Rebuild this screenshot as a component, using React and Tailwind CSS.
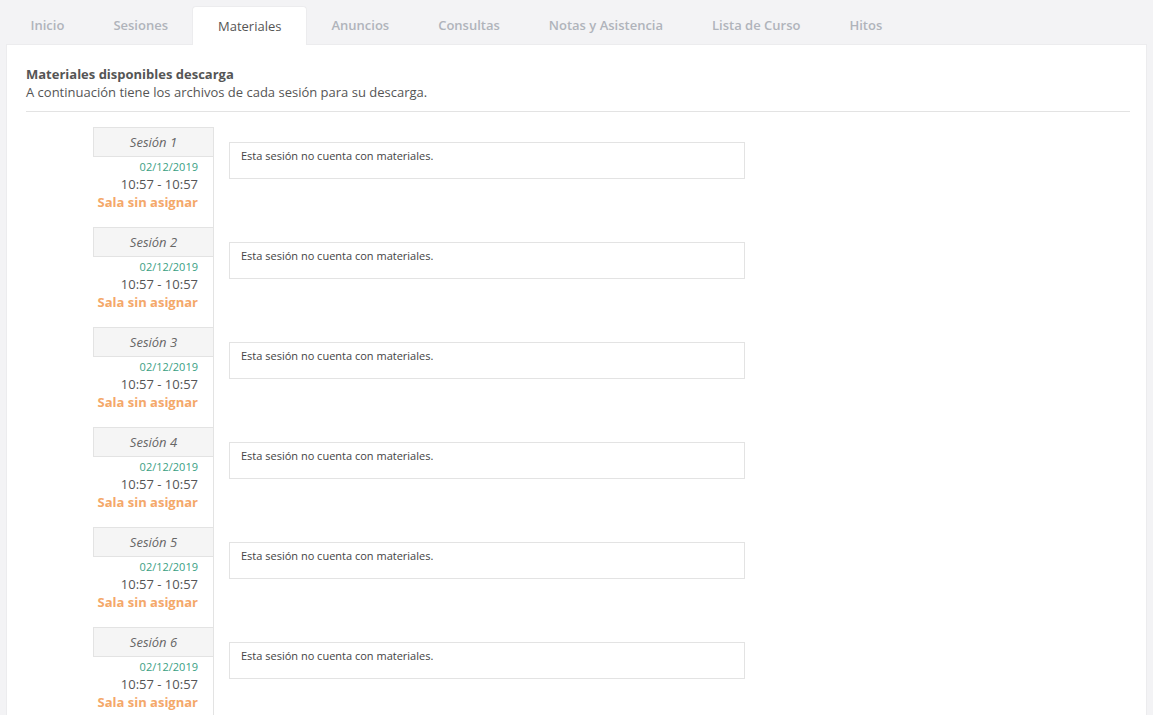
import React from "react";

const tabs = ["Inicio", "Sesiones", "Materiales", "Anuncios", "Consultas", "Notas y Asistencia", "Lista de Curso", "Hitos"];

function Session({ n }) {
  return (
    <div className="flex h-[100px]">
      <div className="w-[121px] ml-[67px] border-r border-[#e3e3e3] flex flex-col">
        <div className="h-[30px] pt-[2px] bg-[#f5f5f5] border-y border-l border-[#e3e3e3] flex items-center justify-center italic text-[13px] text-[#666]">
          Sesión {n}
        </div>
        <div className="pr-[15px] text-right text-[11px] leading-[14px] text-[#3aa083] mt-[3px]">02/12/2019</div>
        <div className="pr-[15px] text-right text-[13px] leading-[18px] text-[#555] mt-[1px]">10:57 - 10:57</div>
        <div className="pr-[15px] text-right text-[13px] leading-[18px] font-bold text-[#f4a86a]">Sala sin asignar</div>
      </div>
      <div className="ml-[15px] mt-[15px]">
        <div className="w-[516px] h-[37px] border border-[#e3e3e3] pl-[11px] pt-[6px] text-[11px] leading-[14px] text-[#444]">
          Esta sesión no cuenta con materiales.
        </div>
      </div>
    </div>
  );
}

export default function App() {
  return (
    <div className="w-[1153px] h-[715px] overflow-hidden bg-[#f3f3f5] font-['Open_Sans',sans-serif]">
      <div className="flex pl-[6px] pt-[6px] h-[44px]">
        {tabs.map((t) => (
          <div
            key={t}
            className={
              t === "Materiales"
                ? "px-[24.5px] pt-[2px] bg-white rounded-t-[4px] border border-b-0 border-[#ececee] text-[#555] text-[13px] flex items-center h-[39px] relative z-10"
                : "px-[24.5px] pt-[2px] text-[#b0b4bb] font-semibold text-[13px] flex items-center h-[38px]"
            }
          >
            {t}
          </div>
        ))}
      </div>
      <div className="mx-[6px] bg-white border border-[#ececee] h-[700px] pl-[19px] pr-[16px] pt-[20px]">
        <div className="text-[13px] leading-[18px] font-bold text-[#555]">Materiales disponibles descarga</div>
        <div className="text-[13px] leading-[18px] text-[#555]">A continuación tiene los archivos de cada sesión para su descarga.</div>
        <div className="border-t border-[#e3e3e3] mt-[10px] mb-[15px]" />
        {[1, 2, 3, 4, 5, 6].map((n) => (
          <Session key={n} n={n} />
        ))}
      </div>
    </div>
  );
}
